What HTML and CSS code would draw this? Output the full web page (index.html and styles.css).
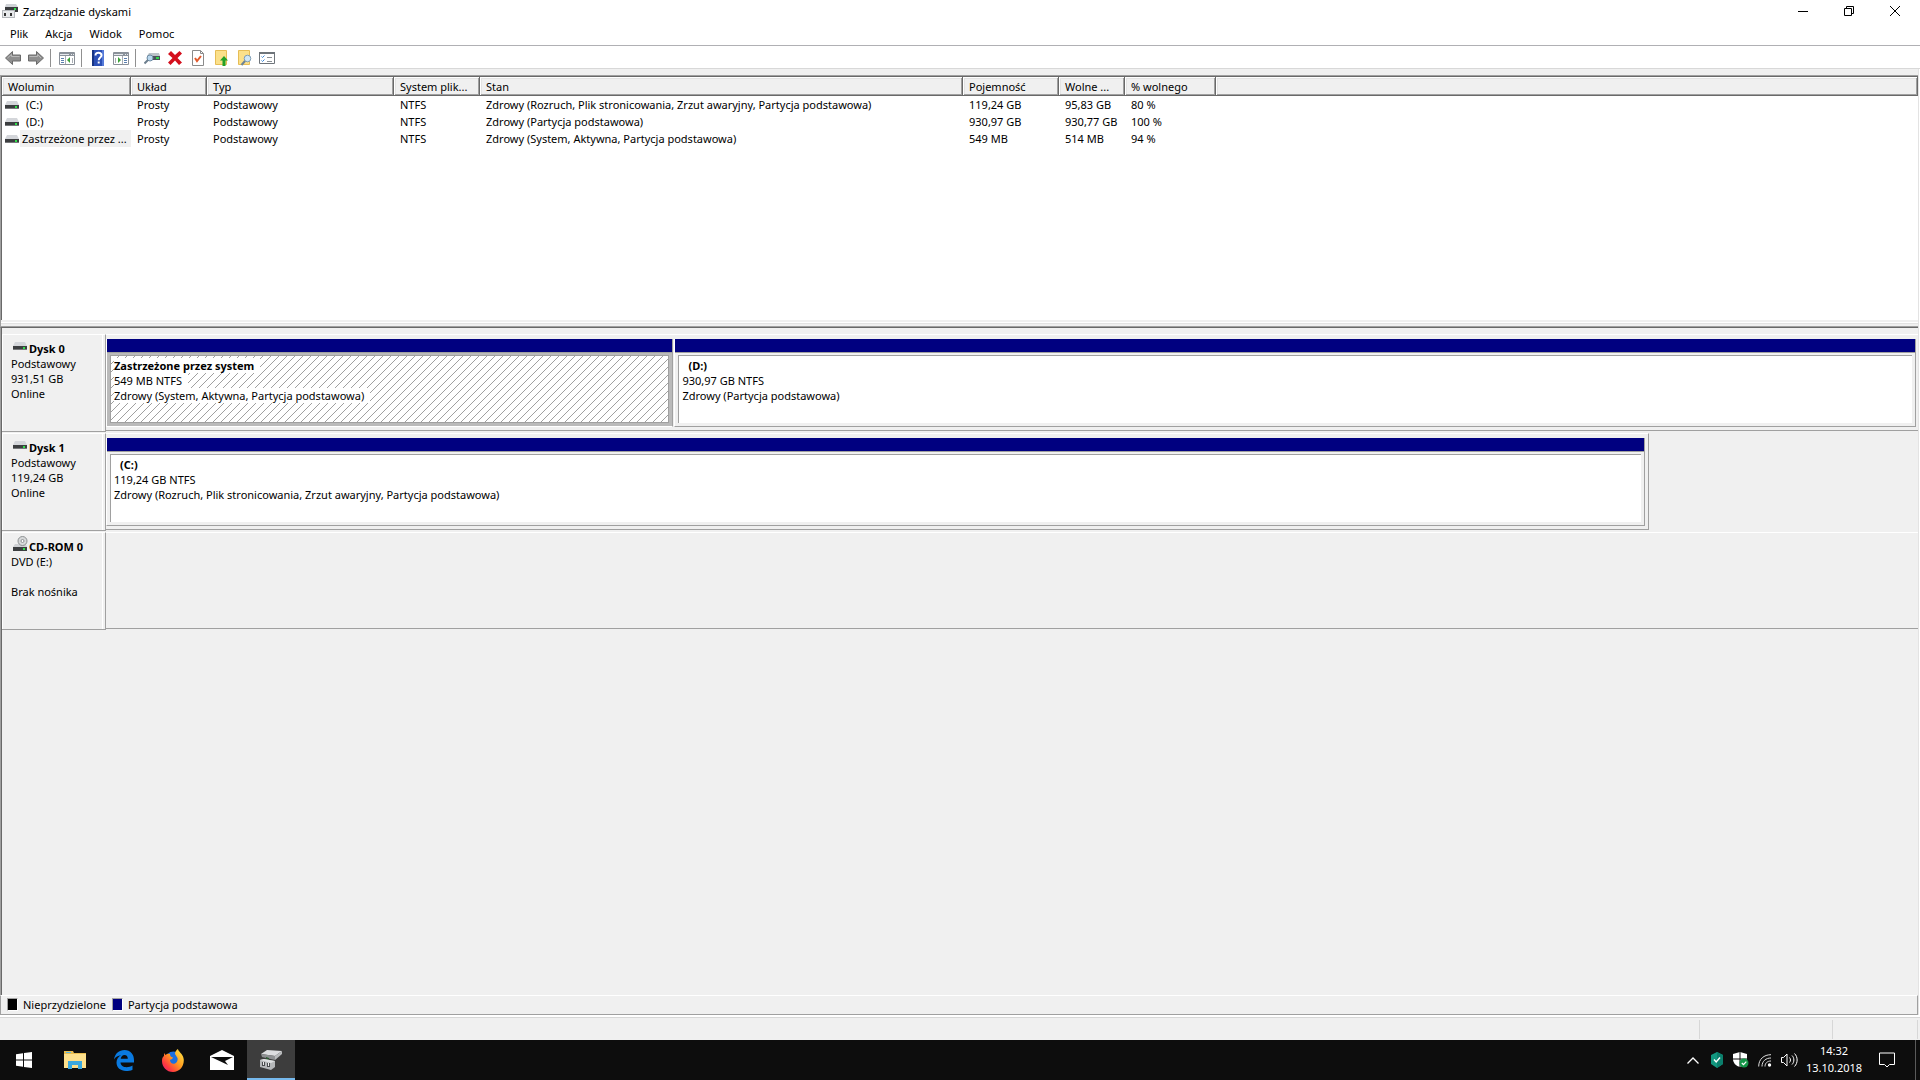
FILE: index.html
```html
<!DOCTYPE html>
<html lang="pl">
<head>
<meta charset="utf-8">
<title>Zarządzanie dyskami</title>
<link rel="stylesheet" href="styles.css">
</head>
<body>
<svg class="defs" aria-hidden="true">
  <symbol id="drive" viewBox="0 0 14 8">
    <path d="M2 0h10l2 4H0z" fill="#d4d6da"/>
    <path d="M0 4h14v4H0z" fill="#3c3e40"/>
    <path d="M0 7h14v1H0z" fill="#77797b"/>
    <path d="M10 5h2v2h-2z" fill="#2fe04a"/>
  </symbol>
</svg>
<div class="app">
  <header class="titlebar">
    <svg class="app-icon" viewBox="0 0 16 16" aria-hidden="true">
      <path d="M4 1h10l2 3H3z" fill="#cfd2d6"/><path d="M3 4h13v5H3z" fill="#3a3c3e"/><path d="M12 5h2v2h-2z" fill="#2fe04a"/>
      <path d="M0 7h13v8H0z" fill="#b4b7bb"/><path d="M1 8h11v6H1z" fill="#e8eaec"/><path d="M2 10h2v3H2zM8 10h2v3H8z" fill="#333"/>
    </svg>
    <h1 class="title">Zarządzanie dyskami</h1>
    <div class="window-controls">
      <button class="win-btn" aria-label="Minimalizuj"><svg width="10" height="10" viewBox="0 0 10 10"><path d="M0 5.500h10" stroke="#000" fill="none"/></svg></button>
      <button class="win-btn" aria-label="Przywróć"><svg width="10" height="10" viewBox="0 0 10 10"><path d="M.5 2.500h7v7h-7zM2.500 2.500v-2h7v7h-2" stroke="#000" fill="none"/></svg></button>
      <button class="win-btn" aria-label="Zamknij"><svg width="10" height="10" viewBox="0 0 10 10"><path d="M0 0l10 10M10 0L0 10" stroke="#000" fill="none"/></svg></button>
    </div>
  </header>
  <nav class="menubar">
    <button class="menu">Plik</button>
    <button class="menu">Akcja</button>
    <button class="menu">Widok</button>
    <button class="menu">Pomoc</button>
  </nav>
  <div class="toolbar" role="toolbar">
    <button class="tool" aria-label="Wstecz"><svg viewBox="0 0 16 16"><path d="M.5 8L7.500 1.500V5h8v6h-8v3.500z" fill="#8f8f8f" stroke="#6a6a6a"/><path d="M2.500 8l4-3.500V6.500h8" stroke="#b9b9b9" fill="none"/></svg></button>
    <button class="tool" aria-label="Dalej"><svg viewBox="0 0 16 16"><path d="M15.500 8L8.500 1.500V5h-8v6h8v3.500z" fill="#8f8f8f" stroke="#6a6a6a"/><path d="M1.500 6.500h8V4.500l3.500 3.500" stroke="#b9b9b9" fill="none"/></svg></button>
    <span class="tool-sep"></span>
    <button class="tool" aria-label="Drzewo konsoli"><svg viewBox="0 0 16 16"><path d="M.5 2.500h15v12H.5z" fill="#fff" stroke="#8a9098"/><path d="M1 3h14v3H1z" fill="#8b929b"/><path d="M1 4.500h9M12 4.500h1M14 4.500h1" stroke="#e6e9ec"/><path d="M6.500 6v8M13.500 8v5" stroke="#a8adb3"/><path d="M2 8.500h3M2 10.500h3M2 12.500h3" stroke="#5b7fae"/><path d="M11 7v6L8 10z" fill="#3aa236"/></svg></button>
    <span class="tool-sep"></span>
    <button class="tool" aria-label="Pomoc"><svg viewBox="0 0 16 16"><path d="M2 0h12v16H2z" fill="#2b4fb5"/><path d="M2 0h2v16H2z" fill="#173483"/><path d="M12 0h2v16h-2z" fill="#5479d8"/><path d="M5.500 5.500c0-4 6-3.500 6-.3 0 2.300-2.800 2.300-2.800 5" stroke="#fff" stroke-width="2" fill="none"/><path d="M7.700 11.500h2v2h-2z" fill="#fff"/></svg></button>
    <button class="tool" aria-label="Okienko akcji"><svg viewBox="0 0 16 16"><path d="M.5 2.500h15v12H.5z" fill="#fff" stroke="#8a9098"/><path d="M1 3h14v3H1z" fill="#8b929b"/><path d="M1 4.500h9M12 4.500h1M14 4.500h1" stroke="#e6e9ec"/><path d="M9.500 6v8M2.500 8v5" stroke="#a8adb3"/><path d="M11 8.500h3M11 10.500h3M11 12.500h3" stroke="#5b7fae"/><path d="M5 7v6l3-3z" fill="#3aa236"/></svg></button>
    <span class="tool-sep"></span>
    <button class="tool" aria-label="Skanuj ponownie dyski"><svg viewBox="0 0 16 16"><path d="M5 3h10l1 3H3z" fill="#bcc3c9"/><path d="M3 6h13v4H3z" fill="#4a5359"/><path d="M12 7h3v2h-3z" fill="#30d94a"/><circle cx="6" cy="8" r="3" fill="#b9d7ee" stroke="#6d8ba3"/><path d="M4 10l-3.500 3.500" stroke="#6d7f8e" stroke-width="2"/></svg></button>
    <button class="tool" aria-label="Usuń"><svg viewBox="0 0 16 16"><path d="M1 4l3-3 4 4 4.500-4L15 3.500 10.500 8l4.500 4.500-3 2.500-4-4.500L3.500 15 1 12.500 5.500 8z" fill="#d40f1c"/></svg></button>
    <button class="tool" aria-label="Właściwości"><svg viewBox="0 0 16 16"><path d="M2.500.5h8l3 3v12h-11z" fill="#fff" stroke="#8a8a8a"/><path d="M10.500.5v3h3" stroke="#8a8a8a" fill="none"/><path d="M5 8l2 3 4-5" stroke="#e2592b" stroke-width="2" fill="none"/></svg></button>
    <button class="tool" aria-label="W górę"><svg viewBox="0 0 16 16"><path d="M2.500.5h11v14h-11z" fill="#fbe08a" stroke="#e6bd55"/><path d="M11 6l4 4.500h-2.500V16h-3v-5.500H7z" fill="#23a127"/></svg></button>
    <button class="tool" aria-label="Znajdź"><svg viewBox="0 0 16 16"><path d="M2.500.5h11v14h-11z" fill="#fbe08a" stroke="#e6bd55"/><circle cx="11.500" cy="8.500" r="3.300" fill="#cfe6f6" stroke="#7f9db4"/><path d="M9 11l-3.500 4" stroke="#6d8497" stroke-width="2"/></svg></button>
    <button class="tool" aria-label="Lista"><svg viewBox="0 0 16 16"><path d="M.5 2.500h15v11H.5z" fill="#fff" stroke="#6e747a"/><path d="M0 2h16v2H0z" fill="#6e747a"/><path d="M2.500 6.500l1 1 2-2M2.500 10.500l1 1 2-2" stroke="#3b87d6" fill="none"/><path d="M8 7.500h5M8 11.500h5" stroke="#8a8f94"/></svg></button>
  </div>
  <main class="workspace">
    <section class="volumes">
      <table class="vol-table">
        <colgroup><col class="c-vol"><col class="c-layout"><col class="c-type"><col class="c-fs"><col class="c-state"><col class="c-cap"><col class="c-free"><col class="c-pct"><col></colgroup>
        <thead><tr><th>Wolumin</th><th>Układ</th><th>Typ</th><th>System plik...</th><th>Stan</th><th>Pojemność</th><th>Wolne ...</th><th>% wolnego</th><th></th></tr></thead>
        <tbody>
          <tr><td class="vol"><div class="vol-cell"><svg class="drive"><use href="#drive"/></svg><span class="vol-name indent">(C:)</span></div></td><td>Prosty</td><td>Podstawowy</td><td>NTFS</td><td>Zdrowy (Rozruch, Plik stronicowania, Zrzut awaryjny, Partycja podstawowa)</td><td>119,24 GB</td><td>95,83 GB</td><td>80 %</td><td></td></tr>
          <tr><td class="vol"><div class="vol-cell"><svg class="drive"><use href="#drive"/></svg><span class="vol-name indent">(D:)</span></div></td><td>Prosty</td><td>Podstawowy</td><td>NTFS</td><td>Zdrowy (Partycja podstawowa)</td><td>930,97 GB</td><td>930,77 GB</td><td>100 %</td><td></td></tr>
          <tr><td class="vol"><div class="vol-cell"><svg class="drive"><use href="#drive"/></svg><span class="vol-name selected">Zastrzeżone przez ...</span></div></td><td>Prosty</td><td>Podstawowy</td><td>NTFS</td><td>Zdrowy (System, Aktywna, Partycja podstawowa)</td><td>549 MB</td><td>514 MB</td><td>94 %</td><td></td></tr>
        </tbody>
      </table>
    </section>
    <div class="splitter"></div>
    <section class="disks">
      <article class="disk">
        <div class="disk-label">
          <h2 class="disk-name"><svg class="drive"><use href="#drive"/></svg>Dysk 0</h2>
          <p>Podstawowy</p><p>931,51 GB</p><p>Online</p>
        </div>
        <div class="disk-map">
          <div class="partition small selected">
            <div class="bar"></div>
            <div class="part-body"><div class="part-info"><p><b>Zastrzeżone przez system</b></p><p><span>549 MB NTFS</span></p><p><span>Zdrowy (System, Aktywna, Partycja podstawowa)</span></p></div></div>
          </div>
          <div class="partition large">
            <div class="bar"></div>
            <div class="part-body"><div class="part-info"><p class="indent"><b>(D:)</b></p><p>930,97 GB NTFS</p><p>Zdrowy (Partycja podstawowa)</p></div></div>
          </div>
        </div>
      </article>
      <article class="disk">
        <div class="disk-label">
          <h2 class="disk-name"><svg class="drive"><use href="#drive"/></svg>Dysk 1</h2>
          <p>Podstawowy</p><p>119,24 GB</p><p>Online</p>
        </div>
        <div class="disk-map partial">
          <div class="partition large">
            <div class="bar"></div>
            <div class="part-body"><div class="part-info"><p class="indent"><b>(C:)</b></p><p>119,24 GB NTFS</p><p>Zdrowy (Rozruch, Plik stronicowania, Zrzut awaryjny, Partycja podstawowa)</p></div></div>
          </div>
        </div>
      </article>
      <article class="disk">
        <div class="disk-label">
          <h2 class="disk-name"><svg class="cdrom" viewBox="0 0 15 15"><path d="M2 8h11l1 3H0z" fill="#cfd1d4"/><circle cx="9.500" cy="5" r="4.500" fill="#d7d9da" stroke="#8d9092"/><circle cx="9.500" cy="5" r="1.500" fill="#fff" stroke="#8d9092"/><path d="M0 11h14v4H0z" fill="#3c3e40"/><path d="M10 12h2v2h-2z" fill="#2fe04a"/></svg>CD-ROM 0</h2>
          <p>DVD (E:)</p><p>&nbsp;</p><p>Brak nośnika</p>
        </div>
        <div class="disk-map empty"></div>
      </article>
    </section>
    <ul class="legend">
      <li><span class="swatch unallocated"></span>Nieprzydzielone</li>
      <li><span class="swatch primary"></span>Partycja podstawowa</li>
    </ul>
  </main>
  <footer class="statusbar"><span class="status-main"></span><span class="status-mid"></span><span class="status-end"></span></footer>
  <nav class="taskbar">
    <button class="task" aria-label="Start"><svg width="16" height="16" viewBox="0 0 16 16"><path d="M0 2.200l7-1v6.300H0zM8 1l8-1v7.500H8zM0 8.500h7v6.300l-7-1zM8 8.500h8V16l-8-1z" fill="#fff"/></svg></button>
    <div class="tasks">
      <button class="task" aria-label="Eksplorator plików"><svg width="22" height="18" viewBox="0 0 22 18"><path d="M0 0h9l1 2h12v15H0z" fill="#e9bd4f"/><path d="M0 3h22v14H0z" fill="#fde08c"/><path d="M2 1h5v1H2z" fill="#5bb8e8"/><path d="M4 18v-8h14v8h-4v-4H8v4z" fill="#3ba9e0"/></svg></button>
      <button class="task" aria-label="Microsoft Edge"><svg width="20" height="21" viewBox="0 0 20 21"><path d="M0 9.500C1 3.500 5 0 10.500 0 16.500 0 20 4.500 20 10v2.500H6.500c.2 3 2.800 4.700 6 4.700 2.300 0 4.300-.6 6-1.700v4.200c-2 1-4 1.300-6.500 1.300-5.500 0-9.500-3.200-9.500-8.400 0-3.200 1.800-5.800 4.500-7.300C4 5.800 1.500 7 0 9.500zM6.700 8.800h7.100C13.800 6.300 12.700 5 10.500 5 8.500 5 7.200 6.300 6.700 8.800z" fill="#0a7ae0" fill-rule="evenodd"/></svg></button>
      <button class="task" aria-label="Firefox"><svg width="22" height="23" viewBox="0 0 22 23"><defs><linearGradient id="fox" x1="1" y1="0" x2="0" y2="1"><stop offset="0" stop-color="#fff04a"/><stop offset=".45" stop-color="#ff9a1f"/><stop offset=".75" stop-color="#ff3b3f"/><stop offset="1" stop-color="#e3157c"/></linearGradient></defs><circle cx="11.500" cy="11" r="8.500" fill="#1b6fe0"/><path d="M2 4l1.500 2C5 4.500 6.500 4.500 8 5c0 2 .5 3 3 3.500-.5 1.500-2 2-3 2.500 0 3 2.500 4.500 5 3.500 2-1 3-3 2.500-5.500L13 5c0-2.500 1.500-4 3-5 0 2.500 5 4.500 5.700 10C22.500 17 17.500 23 11 23S0 18 0 12c0-3 .8-4 2-5z" fill="url(#fox)"/></svg></button>
      <button class="task" aria-label="Poczta"><svg width="24" height="20" viewBox="0 0 24 20"><path d="M0 6l12-6 12 6v14H0z" fill="#fff"/><path d="M1 7h22l-8 4 3 4L1 7z" fill="#0d0d0d"/></svg></button>
      <button class="task active" aria-label="Zarządzanie dyskami"><svg width="22" height="20" viewBox="0 0 22 20"><path d="M1 4l6-4 15 1-7 5z" fill="#dcdddf"/><path d="M1 4l14 2v4L2 7z" fill="#8e9092"/><path d="M15 6l7-5v3l-7 6z" fill="#b9bbbd"/><path d="M6 7l3 1v2l-3-1z" fill="#2c5a32"/><path d="M0 10l4-1 11 2v6l-4 3-11-3z" fill="#b5b7b9"/><path d="M0 10l4-1 11 2-4 2z" fill="#dfe1e2"/><path d="M2 12h3v4H2zM7 13h3v4H7z" fill="#4b4d4f"/><path d="M3 12h1v3H3zM8 13h1v3H8z" fill="#eee"/></svg></button>
    </div>
    <div class="tray">
      <button class="tray-btn" aria-label="Ukryte ikony"><svg width="12" height="7" viewBox="0 0 12 7"><path d="M.5 6.500L6 1l5.500 5.500" stroke="#fff" stroke-width="1.300" fill="none"/></svg></button>
      <button class="tray-btn" aria-label="Ochrona"><svg width="12" height="16" viewBox="0 0 12 16"><path d="M6 0l6 3v9l-6 4-6-4V3z" fill="#12977f"/><path d="M6 0l6 3v9l-6 4z" fill="#0b7f6c"/><path d="M3 7.500l2.200 2.500L9 5.500" stroke="#fff" stroke-width="1.400" fill="none"/></svg></button>
      <button class="tray-btn" aria-label="Zabezpieczenia"><svg width="16" height="16" viewBox="0 0 16 16"><path d="M7 0l7 2v5c0 4-3 7-7 8-4-1-7-4-7-8V2z" fill="#fff"/><path d="M7 0v15M0 7h14" stroke="#0d0d0d"/><circle cx="11" cy="11" r="4.500" fill="#149447"/><path d="M8.800 11l1.700 1.700L13.300 9.700" stroke="#fff" stroke-width="1.200" fill="none"/></svg></button>
      <button class="tray-btn" aria-label="Sieć"><svg width="14" height="14" viewBox="0 0 14 14"><path d="M.7 13.500C.7 6 6 1.700 13 1.700M4 13.500C4 8 8 5 13 5M7 13.500c0-3.500 2.500-5.500 6-5.500" stroke="#ddd" fill="none"/><circle cx="11.500" cy="12" r="1.700" fill="#fff"/></svg></button>
      <button class="tray-btn" aria-label="Głośność"><svg width="17" height="14" viewBox="0 0 17 14"><path d="M.5 4.500h2l3.500-3.500v12l-3.500-3.500h-2zM8.500 4.500c1.300 1.500 1.300 3.500 0 5M11 2.500c2.500 2.500 2.500 6.500 0 9M13.500.5c3.500 3.500 3.500 9.500 0 13" stroke="#fff" fill="none"/></svg></button>
      <button class="clock"><time>14:32</time><time>13.10.2018</time></button>
      <button class="notify" aria-label="Centrum akcji"><svg width="16" height="16" viewBox="0 0 16 16"><path d="M.5 1h15v11.500h-5L8 15l-2.500-2.500h-5z" stroke="#fff" fill="none"/></svg></button>
      <button class="desktop" aria-label="Pokaż pulpit"></button>
    </div>
  </nav>
</div>
</body>
</html>
```
FILE: styles.css
```css
:root {
  --face: #f0f0f0;
  --shadow: #a0a0a0;
  --dark: #696969;
  --light: #e3e3e3;
  --navy: #000080;
}
* { box-sizing: border-box; }
body {
  margin: 0;
  font-family: "Noto Sans", "Open Sans", sans-serif;
  font-size: 11px;
  line-height: 15px;
  color: #000;
  background: #fff;
}
h1, h2, p, ul { margin: 0; padding: 0; font-size: inherit; }
button {
  padding: 0;
  border: 0;
  background: none;
  font: inherit;
  color: inherit;
}
.defs { display: none; }
.app { display: flex; flex-direction: column; min-height: 100vh; }

.titlebar { display: flex; align-items: center; height: 24px; padding: 0 2px 2px 2px; }
.app-icon { width: 16px; height: 16px; margin-right: 5px; }
.title { font-weight: 400; }
.window-controls { display: flex; margin-left: auto; }
.win-btn { display: flex; align-items: center; justify-content: center; width: 46px; height: 20px; }

.menubar { display: flex; gap: 1px; height: 22px; padding: 0 0 2px 2px; border-bottom: 1px solid #b0b0b4; }
.menu { padding: 0 8px; }

.toolbar {
  display: flex;
  align-items: center;
  height: 23px;
  padding: 2px 0 0 1px;
  border-bottom: 1px solid #d8d8d8;
}
.tool { display: flex; justify-content: center; width: 23px; height: 16px; }
.tool svg { width: 16px; height: 16px; }
.tool-sep { width: 8px; height: 18px; }
.tool-sep::before { content: ""; display: block; width: 1px; height: 18px; margin-left: 3px; background: #909090; }

.workspace {
  flex: 1;
  display: flex;
  flex-direction: column;
  margin-right: 1px;
  padding-top: 6px;
  background: var(--face);
  border-right: 1px solid var(--light);
}
.volumes {
  height: 245px;
  background: #fff;
  border-top: 1px solid var(--shadow);
  border-left: 1px solid var(--shadow);
  box-shadow: inset 1px 1px var(--dark);
  padding: 1px 0 0 1px;
}
.vol-table { width: 100%; table-layout: fixed; border-collapse: collapse; }
.c-vol { width: 129px; }
.c-layout { width: 76px; }
.c-type { width: 187px; }
.c-fs { width: 86px; }
.c-state { width: 483px; }
.c-cap { width: 96px; }
.c-free { width: 66px; }
.c-pct { width: 91px; }
th {
  height: 19px;
  padding: 0 6px;
  background: var(--face);
  box-shadow: inset -1px -1px var(--dark), inset 1px 1px #fff, inset -2px -2px var(--shadow), inset 2px 2px var(--light);
  font-weight: 400;
  text-align: left;
  white-space: nowrap;
}
td { height: 17px; padding: 0 6px; white-space: nowrap; }
td.vol { padding: 0 0 0 3px; }
.vol-cell { display: flex; align-items: center; }
.drive { width: 14px; height: 8px; }
.vol-name { flex: 1; margin-left: 1px; padding-left: 2px; line-height: 17px; }
.vol-name.indent { padding-left: 6px; }
.vol-name.selected { background: var(--face); }

.splitter {
  height: 8px;
  border-left: 1px solid var(--shadow);
  border-bottom: 1px solid var(--dark);
  background: linear-gradient(var(--face) 2px, #fff 2px 3px, var(--light) 3px 4px, var(--face) 4px 6px, var(--shadow) 6px);
}

.disks {
  flex: 1;
  padding-top: 6px;
  border-left: 1px solid var(--shadow);
  box-shadow: inset 1px 0 var(--dark);
  padding-left: 1px;
}
.disk { display: flex; height: 99px; padding-bottom: 1px; }
.disk-label {
  width: 104px;
  padding: 6px 0 0 9px;
  border-top: 1px solid #fff;
  border-bottom: 1px solid var(--shadow);
  border-right: 1px solid var(--shadow);
  box-shadow: inset 1px 0 #fff, inset -2px 0 var(--face), inset -3px 0 #fff;
}
.disk-name { display: flex; height: 15px; font-weight: 700; white-space: nowrap; }
.disk-name .drive { margin: 1px 2px 0; }
.cdrom { width: 15px; height: 15px; margin: -3px 1px 0 2px; }
.disk-map {
  flex: 1;
  display: flex;
  gap: 1px;
  height: 97px;
  padding: 4px 2px 3px 0;
  border-top: 1px solid #fff;
  border-bottom: 1px solid var(--shadow);
}
.disk-map.partial { flex: 0 0 80.550%; padding-right: 3px; border-right: 1px solid var(--shadow); }
.partition {
  display: flex;
  flex-direction: column;
  border-left: 1px solid #fff;
  border-right: 1px solid var(--shadow);
  border-bottom: 1px solid var(--shadow);
}
.small { flex: 567; }
.large { flex: 1243; }
.bar { height: 14px; background: var(--navy); border-bottom: 1px solid var(--shadow); }
.part-body { flex: 1; display: flex; padding: 2px 3px 3px; }
.part-info {
  flex: 1;
  padding: 2px 3px;
  background: #fff;
  border-top: 1px solid var(--shadow);
  border-left: 1px solid var(--shadow);
}
.part-info .indent { padding-left: 6px; }
.partition.selected { border-bottom-color: #fff; }
.selected .part-body { background: #bababa; }
.selected .part-info {
  border: 1px solid var(--shadow);
  background: url("data:image/svg+xml,%3Csvg xmlns='http://www.w3.org/2000/svg' width='8' height='8'%3E%3Cpath d='M0 7h1v1H0zM1 6h1v1H1zM2 5h1v1H2zM3 4h1v1H3zM4 3h1v1H4zM5 2h1v1H5zM6 1h1v1H6zM7 0h1v1H7z' fill='%23a0a0a0'/%3E%3C/svg%3E") #fff;
}
.selected .part-info b, .selected .part-info span { display: inline-block; padding-right: 6px; background: #fff; }

.legend {
  display: flex;
  align-items: center;
  gap: 6px;
  height: 20px;
  padding: 0 0 1px 6px;
  list-style: none;
  border: 1px solid var(--shadow);
  border-top-color: #fff;
}
.legend li { display: flex; align-items: center; gap: 5px; }
.swatch { width: 11px; height: 13px; border: 1px solid #fff; border-top-color: var(--shadow); border-left-color: var(--shadow); }
.unallocated { background: #000; }
.primary { background: var(--navy); }

.statusbar {
  display: flex;
  height: 25px;
  padding: 1px 2px 1px 0;
  background: linear-gradient(#fff 2px, #d7d7d7 2px 3px, var(--face) 3px);
}
.statusbar span { margin-top: 4px; border-right: 1px solid #d7d7d7; }
.status-main { flex: 1; }
.status-mid { width: 133px; }
.status-end { width: 85px; }

.taskbar { display: flex; height: 40px; background: #0d0d0d; color: #fff; }
.tasks { display: flex; gap: 1px; margin-left: 3px; }
.task { display: flex; align-items: center; justify-content: center; width: 48px; height: 40px; }
.task.active { padding-top: 2px; background: #3d3d3d; border-bottom: 2px solid #76b9ed; }
.tray { display: flex; align-items: center; margin-left: auto; }
.tray-btn { display: flex; align-items: center; justify-content: center; width: 24px; height: 40px; }
.clock { display: flex; flex-direction: column; align-items: center; width: 66px; padding-bottom: 2px; line-height: 17px; }
.notify { display: flex; align-items: center; justify-content: center; width: 40px; height: 40px; }
.desktop { width: 5px; height: 40px; margin-left: 8px; border-left: 1px solid #5a5a5a; }
```
